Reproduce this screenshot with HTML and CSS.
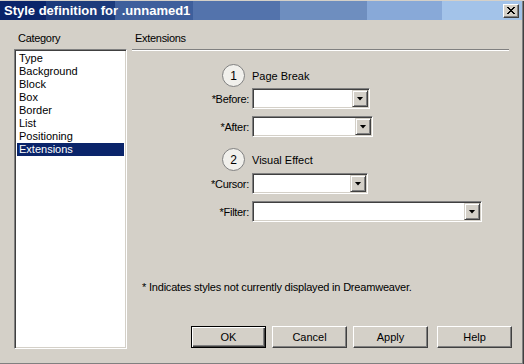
FILE: index.html
```html
<!DOCTYPE html>
<html lang="en">
<head>
    <meta charset="UTF-8">
    <title>Style definition for .unnamed1</title>
    <link rel="stylesheet" href="styles.css">
</head>
<body>
    <div class="window">
        <div class="frame">
            <div class="titlebar">
                <span class="title">Style definition for .unnamed1</span>
                <span class="close-btn">
                    <svg width="8" height="7" viewBox="0 0 8 7" shape-rendering="crispEdges">
                        <path d="M0 0h2v1H0z M6 0h2v1H6z M1 1h2v1H1z M5 1h2v1H5z M2 2h4v1H2z M3 3h2v1H3z M2 4h4v1H2z M1 5h2v1H1z M5 5h2v1H5z M0 6h2v1H0z M6 6h2v1H6z" fill="#000"/>
                    </svg>
                </span>
            </div>
            <div class="dialog">
                <div class="category">
                    <div class="caption">Category</div>
                    <ul class="category-list">
                        <li>Type</li>
                        <li>Background</li>
                        <li>Block</li>
                        <li>Box</li>
                        <li>Border</li>
                        <li>List</li>
                        <li>Positioning</li>
                        <li class="selected">Extensions</li>
                    </ul>
                </div>
                <div class="panel">
                    <div class="caption">Extensions</div>
                    <div class="separator"></div>

                    <div class="group-head first"><span class="step">1</span>Page Break</div>
                    <div class="field">
                        <label>*Before:</label>
                        <div class="combo combo-before"><span class="combo-btn"></span></div>
                    </div>
                    <div class="field spaced">
                        <label>*After:</label>
                        <div class="combo combo-after"><span class="combo-btn"></span></div>
                    </div>

                    <div class="group-head second"><span class="step">2</span>Visual Effect</div>
                    <div class="field cursor-row">
                        <label>*Cursor:</label>
                        <div class="combo combo-cursor"><span class="combo-btn"></span></div>
                    </div>
                    <div class="field spaced">
                        <label>*Filter:</label>
                        <div class="combo combo-filter"><span class="combo-btn"></span></div>
                    </div>

                    <p class="note">* Indicates styles not currently displayed in Dreamweaver.</p>

                    <div class="buttons">
                        <button class="default">OK</button>
                        <button>Cancel</button>
                        <button>Apply</button>
                        <button class="help">Help</button>
                    </div>
                </div>
            </div>
        </div>
    </div>
</body>
</html>
```

FILE: styles.css
```css
body {
    margin: 0;
    padding: 0;
    background-color: #d4d0c8;
    font-family: "Liberation Sans", Arial, sans-serif;
    font-size: 11px;
    color: #000;
}

.window {
    width: 524px;
    height: 364px;
    box-sizing: border-box;
    border-right: 1px solid #404040;
    border-bottom: 1px solid #404040;
}

.frame {
    height: 100%;
    box-sizing: border-box;
    border-right: 1px solid #808080;
    border-bottom: 1px solid #808080;
}

.titlebar {
    margin-top: 1px;
    height: 19px;
    display: flex;
    align-items: center;
    justify-content: space-between;
    padding: 0 3px 0 4px;
    background: linear-gradient(to right,
        #0a246a 0 46px,
        #1c3b7c 46px 115px,
        #3e5f9c 115px 193px,
        #5373ac 193px 280px,
        #6e8ebf 280px 367px,
        #88a9d8 367px 442px,
        #a3c3e9 442px);
}

.title {
    color: #fff;
    font-weight: bold;
    font-size: 13px;
    line-height: 19px;
}

.close-btn {
    width: 16px;
    height: 14px;
    box-sizing: border-box;
    display: flex;
    align-items: center;
    justify-content: center;
    background-color: #d4d0c8;
    border-top: 1px solid #fff;
    border-left: 1px solid #fff;
    border-right: 1px solid #404040;
    border-bottom: 1px solid #404040;
    box-shadow: inset -1px -1px #808080;
}

.dialog {
    display: flex;
    padding: 0 10px 0 14px;
}

.caption {
    margin-top: 12px;
    line-height: 13px;
    padding-left: 4px;
    letter-spacing: -0.3px;
}

/* Category list on the left */
.category {
    width: 113px;
}

.category-list {
    list-style: none;
    margin: 4px 0 0;
    height: 300px;
    box-sizing: border-box;
    background-color: #fff;
    border-top: 1px solid #808080;
    border-left: 1px solid #808080;
    border-right: 1px solid #fff;
    border-bottom: 1px solid #fff;
    box-shadow: inset 1px 1px #404040, inset -1px -1px #d4d0c8;
    padding: 2px 2px;
}

.category-list li {
    height: 13px;
    line-height: 13px;
    padding-left: 2px;
}

.category-list li.selected {
    background-color: #0a246a;
    color: #fff;
}

/* Right side panel */
.panel {
    width: 380px;
    margin-left: 5px;
}

.panel .caption {
    padding-left: 3px;
}

.separator {
    margin: 4px 3px 0 0;
    border-top: 1px solid #808080;
    border-bottom: 1px solid #fff;
}

.group-head {
    display: flex;
    align-items: center;
    gap: 7px;
    padding-left: 90px;
    height: 23px;
}

.group-head.first {
    margin-top: 13px;
}

.group-head.second {
    margin-top: 11px;
}

.step {
    width: 23px;
    height: 23px;
    box-sizing: border-box;
    border-radius: 50%;
    border: 1px solid #808080;
    background-color: #f1f0ec;
    display: flex;
    align-items: center;
    justify-content: center;
    font-size: 12px;
}

.field {
    display: flex;
    align-items: center;
    margin-top: 1px;
}

.field.cursor-row {
    margin-top: 2px;
}

.field.spaced {
    margin-top: 7px;
}

.field label {
    width: 117px;
    text-align: right;
    margin-right: 3px;
    letter-spacing: -0.3px;
}

.combo {
    height: 21px;
    box-sizing: border-box;
    padding: 1px;
    display: flex;
    justify-content: flex-end;
    background-color: #fff;
    border-top: 1px solid #808080;
    border-left: 1px solid #808080;
    border-right: 1px solid #fff;
    border-bottom: 1px solid #fff;
    box-shadow: inset 1px 1px #404040, inset -1px -1px #d4d0c8;
}

.combo-before { width: 118px; }
.combo-after { width: 121px; }
.combo-cursor { width: 116px; }
.combo-filter { width: 230px; }

.combo-btn {
    width: 16px;
    height: 17px;
    box-sizing: border-box;
    display: flex;
    align-items: center;
    justify-content: center;
    background-color: #d4d0c8;
    border-top: 1px solid #d4d0c8;
    border-left: 1px solid #d4d0c8;
    border-right: 1px solid #404040;
    border-bottom: 1px solid #404040;
    box-shadow: inset 1px 1px #fff, inset -1px -1px #808080;
}

.combo-btn::after {
    content: "";
    width: 7px;
    height: 4px;
    background-color: #000;
    clip-path: polygon(0 0, 100% 0, 50% 100%);
}

.note {
    margin: 59px 0 0;
    padding-left: 10px;
    line-height: 13px;
    letter-spacing: -0.2px;
}

.buttons {
    display: flex;
    justify-content: flex-end;
    gap: 6px;
    margin-top: 32px;
}

.buttons button {
    width: 75px;
    height: 22px;
    margin: 0;
    padding: 0;
    font-family: "Liberation Sans", Arial, sans-serif;
    font-size: 11px;
    color: #000;
    background-color: #d4d0c8;
    border-top: 1px solid #fff;
    border-left: 1px solid #fff;
    border-right: 1px solid #404040;
    border-bottom: 1px solid #404040;
    box-shadow: inset -1px -1px #808080;
}

.buttons button.default {
    border: 1px solid #000;
    box-shadow: inset 1px 1px #fff, inset -1px -1px #404040, inset -2px -2px #808080;
}

.buttons button.help {
    margin-left: 3px;
}
```
